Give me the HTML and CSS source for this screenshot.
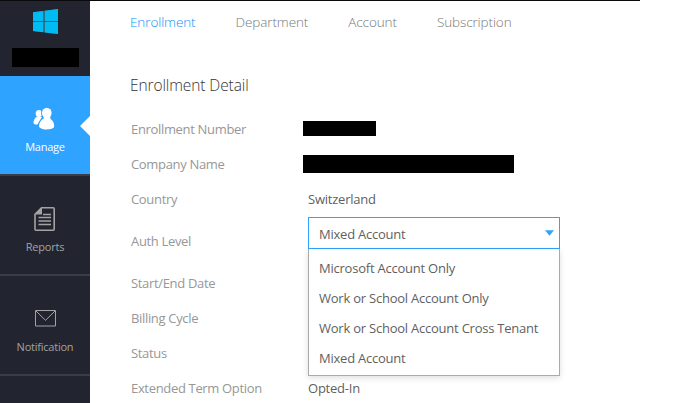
FILE: index.html
```html
<!DOCTYPE html>
<html lang="en">
<head>
<meta charset="utf-8">
<title>Enrollment Detail</title>
<link rel="stylesheet" href="styles.css">
</head>
<body>
<div class="app">
  <nav class="sidebar">
    <div class="brand">
      <svg class="logo" width="26" height="26" viewBox="0 0 26 26">
        <path fill="#35606f" d="M0 3.300 25 0V25L0 22z"/>
        <path fill="#00bcf2" d="M0 3.300 10.200 2V12H0zM11.800 1.800 25 0V12H11.800zM0 13H10.200V23.200L0 22zM11.800 13H25V25L11.800 23.400z"/>
      </svg>
      <div class="redacted redacted-user"></div>
    </div>
    <a class="item active">
      <svg width="22" height="24" viewBox="0 0 22 24">
        <g fill="#fff">
          <ellipse cx="4.900" cy="6.500" rx="3.200" ry="3.500"/>
          <path d="M3.200 9.500C.5 11-.6 14 -.5 16c.3 1.300 2.400 1.700 4 1.500L8 10z"/>
        </g>
        <g fill="#fff" stroke="#2ea3ff" stroke-width="1.800" paint-order="stroke">
          <path d="M9.500 11.500C6.500 13 5 16.500 5 19.200c.2 1.900 3.500 3.200 7.500 3.200s7.500-.6 7.700-2.800c.2-3.500-1.500-6.600-4.300-8.100z"/>
          <ellipse cx="12.800" cy="6" rx="4.800" ry="5.300"/>
        </g>
        <path fill="#fff" d="M9.800 9h6.500v5H9.800z"/>
      </svg>
      <span>Manage</span>
    </a>
    <a class="item">
      <svg width="22" height="24" viewBox="0 0 22 24">
        <path fill="none" stroke="#a2a3a3" stroke-width="1.600" stroke-linejoin="round" d="M7.500.8H19.200Q20.200.8 20.200 1.800V22.200Q20.200 23.200 19.200 23.200H2Q1 23.200 1 22.200V7.200z"/>
        <path fill="#a2a3a3" d="M7.300.8H8V7.500H1V6.800z"/>
        <path stroke="#a2a3a3" stroke-width="1.300" d="M9 7.500h8M4.500 10.500h12.500M4.500 14h12.500M4.500 17.500h12.500"/>
      </svg>
      <span>Reports</span>
    </a>
    <a class="item">
      <svg width="22" height="24" viewBox="0 0 22 24">
        <path fill="none" stroke="#a2a3a3" d="M1.500 -.5h20v15.500h-20zM2 0l9.500 9.300L21 0" transform="translate(0 .0)" class="envelope"/>
      </svg>
      <span>Notification</span>
    </a>
  </nav>
  <main class="content">
    <div class="tabs">
      <a class="tab current">Enrollment</a>
      <a class="tab">Department</a>
      <a class="tab">Account</a>
      <a class="tab">Subscription</a>
    </div>
    <h1>Enrollment Detail</h1>
    <dl class="details">
      <div class="row"><dt>Enrollment Number</dt><dd><div class="redacted redacted-number"></div></dd></div>
      <div class="row"><dt>Company Name</dt><dd><div class="redacted redacted-company"></div></dd></div>
      <div class="row"><dt>Country</dt><dd>Switzerland</dd></div>
      <div class="row row-select"><dt>Auth Level</dt>
        <dd class="select">
          <div class="select-box"><span>Mixed Account</span>
            <svg width="9" height="6" viewBox="0 0 9 6"><path fill="#2ea3ff" d="M0 .2h9L4.500 5.800z"/></svg>
          </div>
          <ul class="menu">
            <li>Microsoft Account Only</li>
            <li>Work or School Account Only</li>
            <li>Work or School Account Cross Tenant</li>
            <li>Mixed Account</li>
          </ul>
        </dd>
      </div>
      <div class="row"><dt>Start/End Date</dt><dd></dd></div>
      <div class="row"><dt>Billing Cycle</dt><dd></dd></div>
      <div class="row"><dt>Status</dt><dd></dd></div>
      <div class="row"><dt>Extended Term Option</dt><dd>Opted-In</dd></div>
    </dl>
  </main>
</div>
</body>
</html>
```

FILE: styles.css
```css
* { box-sizing: border-box; }
body {
  margin: 0;
  height: 403px;
  overflow: hidden;
  background: linear-gradient(#0a0a0c, #0a0a0c) 0 0 / 640px 1px no-repeat #fff;
  font-family: "Open Sans", "Noto Sans", sans-serif;
  font-size: 13px;
  letter-spacing: -.23px;
  color: #5f5f5f;
}
.app { display: flex; height: 403px; padding-top: 1px; }
.sidebar { width: 90px; flex: none; background: #22242f; }
.brand {
  height: 75px;
  padding-top: 8px;
  display: flex;
  flex-direction: column;
  align-items: center;
}
.logo { margin-left: 2px; }
.redacted { background: #000; }
.redacted-user { width: 67px; height: 19px; margin-top: 13px; }
.item {
  position: relative;
  display: flex;
  flex-direction: column;
  align-items: center;
  height: 100px;
  padding-top: 31px;
  border-bottom: 2px solid #3a3c48;
  color: #a2a3a3;
  font-size: 11px;
  line-height: 16px;
}
.item svg { overflow: visible; }
.item span { margin-top: 8px; }
.item .envelope { transform: translateY(4px); }
.active { background: #2ea3ff; color: #fff; background-clip: padding-box; }
.active::after {
  content: "";
  position: absolute;
  right: 0;
  top: 40px;
  border: 10px solid transparent;
  border-right-color: #fff;
  border-left: 0;
}
.content { flex: 1; padding: 10px 0 0 40px; }
.tabs {
  display: flex;
  gap: 40px;
  height: 24px;
  font-size: 13.500px;
  font-weight: 300;
  letter-spacing: -.1px;
  line-height: 22px;
  color: #777;
}
.current { color: #0c91fa; }
h1 {
  margin: 38px 0 0;
  height: 38px;
  font-size: 15.500px;
  font-weight: 300;
  letter-spacing: -.1px;
  line-height: 24px;
  color: #333;
}
.details { margin: 0; padding-left: 1px; }
.row { display: flex; align-items: center; height: 35px; line-height: 20px; }
dt { width: 177px; flex: none; color: #979797; letter-spacing: -.33px; }
dd { margin: 0; }
.redacted-number { width: 73px; height: 15px; margin: -1px 0 0 -5px; }
.redacted-company { width: 211px; height: 18px; margin: 1px 0 0 -5px; }
.row-select { height: 49px; align-items: stretch; }
.row-select dt { line-height: 51px; }
.select { position: relative; width: 252px; height: 32px; margin-top: 1px; }
.select-box {
  display: flex;
  align-items: center;
  justify-content: space-between;
  height: 32px;
  padding: 2px 5px 0 10px;
  border: 1px solid #2ea3ff;
  background: #fff;
}
.select-box svg { margin-top: -3px; }
.menu {
  position: absolute;
  top: 32px;
  left: 0;
  width: 252px;
  height: 127px;
  margin: 0;
  padding: 4px 0 0 10px;
  border: 1px solid #aaa;
  border-top: 0;
  background: #fff;
  box-shadow: 0 2px 6px rgba(0, 0, 0, .13);
  list-style: none;
  line-height: 30px;
  white-space: nowrap;
}
```
